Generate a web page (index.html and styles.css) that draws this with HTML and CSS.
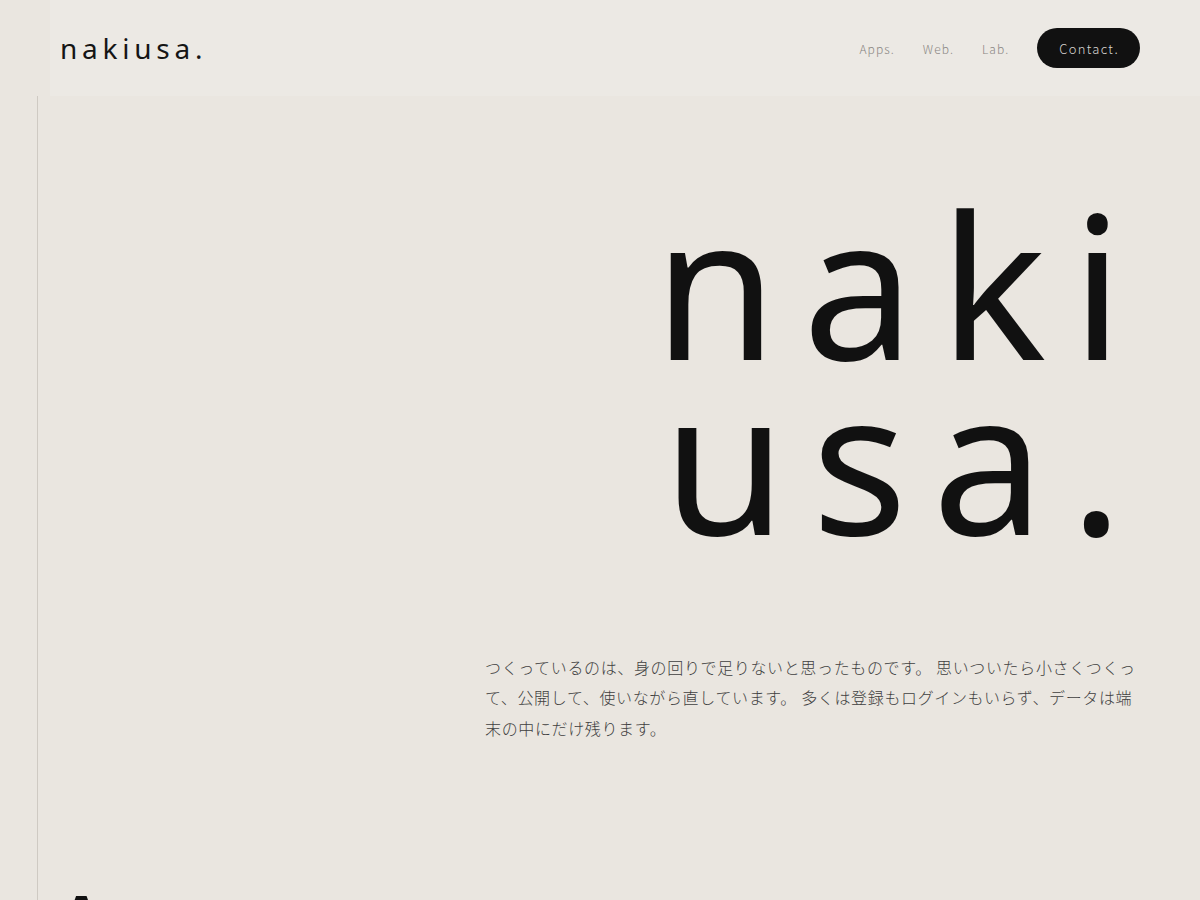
FILE: index.html
```html
<!DOCTYPE html>
<html lang="ja">
<head>
<meta charset="utf-8">
<title>nakiusa.</title>
<link rel="stylesheet" href="styles.css">
</head>
<body>
<header class="site-header">
  <a class="logo" href="#">nakiusa.</a>
  <nav class="nav">
    <a class="nav-link" href="#">Apps.</a>
    <a class="nav-link" href="#">Web.</a>
    <a class="nav-link" href="#">Lab.</a>
    <a class="nav-cta" href="#">Contact.</a>
  </nav>
</header>
<div class="page">
  <div class="rail"></div>
  <main class="main">
    <section class="hero">
      <h1 class="hero-title"><span>naki</span><span>usa.</span></h1>
      <p class="hero-lead">つくっているのは、身の回りで足りないと思ったものです。 思いついたら小さくつくって、公開して、使いながら直しています。 多くは登録もログインもいらず、データは端末の中にだけ残ります。</p>
    </section>
    <section class="section">
      <h2 class="section-title">Apps.</h2>
    </section>
  </main>
</div>
</body>
</html>
```

FILE: styles.css
```css
* { box-sizing: border-box; }
html, body { margin: 0; padding: 0; }
body {
  background: #eae6e0;
  color: #111;
  font-family: "Noto Sans", "Noto Sans CJK JP", sans-serif;
  overflow: hidden;
  height: 900px;
}
a { text-decoration: none; color: inherit; }

.site-header {
  margin-left: 50px;
  height: 96px;
  background: #ece9e4;
  display: flex;
  align-items: center;
  justify-content: space-between;
  padding: 0 60px 0 10px;
}
.logo {
  font-size: 28px;
  font-weight: 400;
  letter-spacing: 0.17em;
  color: #151515;
  line-height: 1;
}
.nav {
  display: flex;
  align-items: center;
  gap: 28px;
  font-family: "Noto Sans CJK JP", "Noto Sans", sans-serif;
}
.nav-link {
  font-size: 12px;
  font-weight: 300;
  letter-spacing: 0.09em;
  color: #8a8783;
}
.nav-cta {
  background: #111;
  color: #d6d4d0;
  font-size: 13px;
  font-weight: 300;
  letter-spacing: 0.1em;
  height: 40px;
  padding: 0 21px 0 22px;
  border-radius: 20px;
  display: flex;
  align-items: center;
}

.page {
  display: flex;
}
.rail {
  width: 38px;
  flex: none;
  border-right: 1px solid #cfcac3;
  min-height: 900px;
}
.main {
  flex: 1;
  padding: 0 60px 0 30px;
}
.hero {
  display: flex;
  flex-direction: column;
  align-items: flex-end;
  padding-top: 99px;
}
.hero-title {
  margin: 0 -8px 0 0;
  font-size: 200px;
  font-weight: 400;
  line-height: 175px;
  letter-spacing: 0.125em;
  text-align: right;
  color: #111;
  display: flex;
  flex-direction: column;
  align-items: flex-end;
}
.hero-lead {
  width: 655px;
  margin: 107px 0 0;
  font-family: "Noto Sans CJK JP", sans-serif;
  font-size: 16px;
  font-weight: 300;
  line-height: 1.9;
  letter-spacing: 0.04em;
  color: #3f3f3f;
}
.section {
  padding-top: 143px;
}
.section-title {
  margin: 0 0 0 -6px;
  font-size: 56px;
  font-weight: 700;
  line-height: 1;
}
```
